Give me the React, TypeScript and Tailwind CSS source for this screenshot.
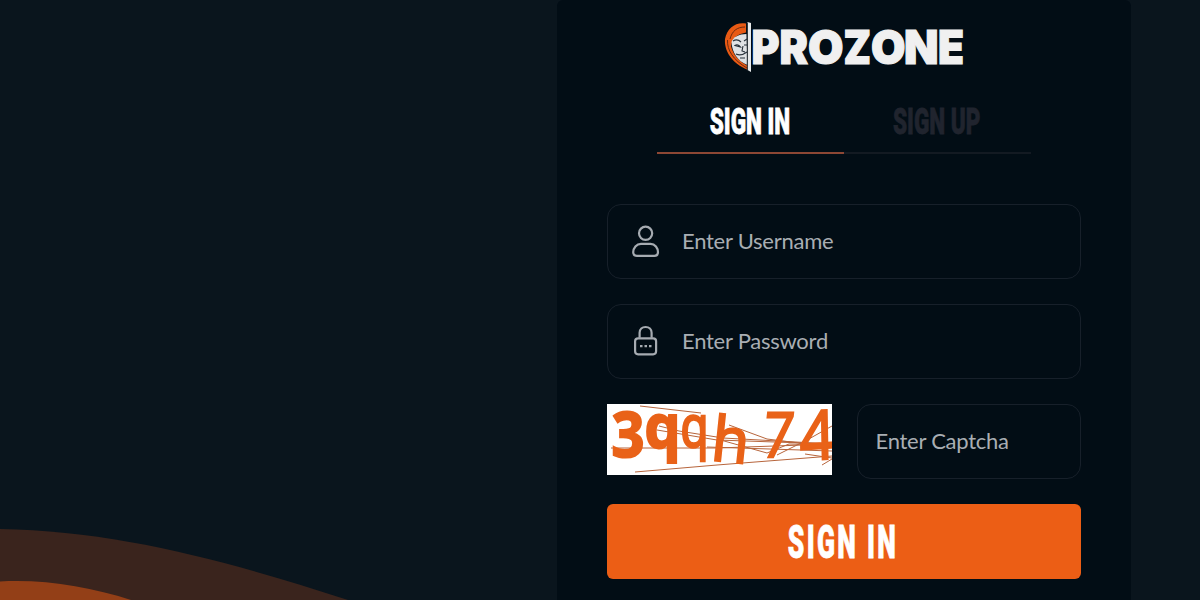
import type { ReactNode } from 'react';

interface FieldProps {
  placeholder: string;
  type?: string;
  icon?: ReactNode;
}

interface TabProps {
  label: string;
  active?: boolean;
}

// [letter, x, width]
const LOGO_LETTERS: [string, number, number][] = [
  ['P', 29.5, 28],
  ['R', 57.5, 28.5],
  ['O', 86, 35.5],
  ['Z', 121.5, 27.5],
  ['O', 149, 34.5],
  ['N', 182, 34.5],
  ['E', 216, 26],
];

const CAPTCHA_LINES = [
  'M33 2 L94 9',
  'M4 44 H110 L225 40',
  'M28 68 L110 61 L225 52',
  'M52 22 L72 27 L116 34 L225 40',
  'M50 26 L110 36 L225 40',
  'M122 21 L160 35 L200 40 L225 43',
  'M110 35 L160 49 L182 40 L225 41',
  'M170 51 L200 36 L225 22',
  'M100 43 L225 47',
  'M198 50 L225 54',
  'M215 61 L225 55',
];

const Logo = () => (
  <svg width="244" height="60" viewBox="0 0 244 60" className="block">
    <path d="M24 5.5C14 3.5 5 10 3 21C2 32 9 45 26 52V48C16 43 11 36 9 28C10 20 16 16 24 14.5Z" fill="#e85a14" />
    <path d="M23 9C15 9 10 13 8 21M5.5 22C5 32 11 42 25 50" fill="none" stroke="#6d2a10" strokeWidth="1" />
    <path d="M24.5 16C17 16 11 19 9.5 24C10 34 15 43 25.5 47Z" fill="#dfe2e4" />
    <path
      d="M11 23C14 21 17 22 19 24M22 23L25 21M13 27.5C15 26 17 27 18.5 29ZM22 27H25M21 28L20 33L23 34M14 36C18 38 21 37 25 34M18 40H23"
      fill="none"
      stroke="#27313a"
      strokeWidth="1.1"
    />
    <path d="M25.5 4L29 5V54L25.5 52Z" fill="#e8eaea" />
    <path d="M25.3 5V52" stroke="#20282e" strokeWidth="1" />
    {LOGO_LETTERS.map(([letter, x, width]) => (
      <text
        key={x}
        x={x}
        y="46"
        textLength={width}
        lengthAdjust="spacingAndGlyphs"
        fill="#f0f0f0"
        stroke="#f0f0f0"
        strokeWidth="1.2"
        className="font-['Inter',sans-serif] text-[47px] font-black"
      >
        {letter}
      </text>
    ))}
  </svg>
);

const UserIcon = () => (
  <svg width="30" height="34" viewBox="0 0 30 34" fill="none" stroke="#a6abb1" strokeWidth="2.2" className="block">
    <circle cx="14.6" cy="9.3" r="6.6" />
    <path d="M10 19.8H19.5C24 19.8 27 24.3 27 28.3C27 30.8 25.5 31.8 23.5 31.8H6C4 31.8 2.2 30.8 2.2 28.3C2.2 24.3 5.5 19.8 10 19.8Z" />
  </svg>
);

const LockIcon = () => (
  <svg width="30" height="34" viewBox="0 0 30 34" fill="none" stroke="#a6abb1" strokeWidth="2.2" className="block">
    <path d="M8.6 13.8V8.8C8.6 5.3 11.1 3 14.6 3S20.6 5.3 20.6 8.8V13.8" />
    <rect x="4.1" y="14.3" width="21" height="16" rx="3" />
    <path d="M9 22.2H11.5M13.5 22.2H16M18 22.2H20.5" />
  </svg>
);

const Captcha = () => (
  <svg
    width="225"
    height="71"
    viewBox="0 0 225 71"
    fill="#e96218"
    className="bg-white font-['Open_Sans',sans-serif] text-[62px]"
  >
    <g fill="none" stroke="#b7653c" strokeWidth="1">
      {CAPTCHA_LINES.map((d) => (
        <path key={d} d={d} />
      ))}
    </g>
    <g stroke="#e96218">
      <text transform="translate(4.5 53) scale(.93 1)" strokeWidth="2" className="font-bold">3</text>
      <text transform="translate(37.5 44) scale(.92 .97)" strokeWidth="2" className="font-bold">q</text>
      <text transform="translate(73.5 42.5) scale(.74 .94)" strokeWidth="2.8">q</text>
      <text transform="translate(103 56) rotate(6) scale(.98 1)" strokeWidth="2.2">h</text>
      <text transform="translate(154 53) skewX(-6) scale(.85 1)" strokeWidth="2.4">7</text>
      <text transform="translate(193 57) rotate(-4) skewX(-3) scale(1 1.1)" strokeWidth="2">4</text>
    </g>
  </svg>
);

const Tab = ({ label, active }: TabProps) => (
  <button className="flex flex-1 flex-col font-['Roboto',sans-serif] text-[37px] leading-[54px] font-black whitespace-nowrap">
    <span
      className={`flex h-[57px] w-full justify-center ${
        active ? 'text-white [-webkit-text-stroke:0.8px_#fff]' : 'text-[#20242e] [-webkit-text-stroke:0.8px_#20242e]'
      }`}
    >
      <span className="-ml-[1px] block scale-x-[.61]">{label}</span>
    </span>
    <span className={`block h-[2px] w-full ${active ? 'bg-[#8d4734]' : 'bg-[#131a22]'}`} />
  </button>
);

const Field = ({ placeholder, type = 'text', icon }: FieldProps) => (
  <label className={`flex h-[75px] items-center rounded-[14px] border border-[#17202a] pb-[2px] ${icon ? 'pl-[23px]' : 'pl-[18px]'}`}>
    {icon && <span className="mr-[21px] shrink-0">{icon}</span>}
    <input
      type={type}
      placeholder={placeholder}
      className="w-full min-w-0 bg-transparent font-['Lato',sans-serif] text-[22px] tracking-[-0.25px] text-white outline-none placeholder:text-[#a9aeb3]"
    />
  </label>
);

export default function App() {
  return (
    <div className="relative flex h-[600px] w-[1200px] overflow-hidden bg-[#0a151d]">
      <svg width="350" height="75" viewBox="0 525 350 75" className="absolute bottom-0 left-0">
        <path d="M0 529C120 531 230 562 348 600H0Z" fill="#3a241d" />
        <path d="M0 581.5C45 579 90 587 131 600H0Z" fill="#933f17" />
      </svg>

      <main className="ml-[557px] flex w-[574px] flex-col rounded-t-md bg-[#020d15] px-[50px] pt-[18px]">
        <div className="flex pl-[115px]">
          <Logo />
        </div>

        <nav className="mx-[50px] mt-[17px] flex">
          <Tab label="SIGN IN" active />
          <Tab label="SIGN UP" />
        </nav>

        <form className="mt-[50px] flex flex-col gap-[25px]" onSubmit={(e) => e.preventDefault()}>
          <Field placeholder="Enter Username" icon={<UserIcon />} />
          <Field placeholder="Enter Password" type="password" icon={<LockIcon />} />
          <div className="grid grid-cols-2 gap-[25px]">
            <Captcha />
            <Field placeholder="Enter Captcha" />
          </div>
          <button
            type="submit"
            className="flex h-[75px] items-center justify-center rounded-md bg-[#ec5e15] pt-[2px] font-['Roboto',sans-serif] text-[46px] font-black tracking-[4px] whitespace-nowrap text-white [-webkit-text-stroke:0.8px_#fff]"
          >
            <span className="-ml-[1px] block scale-x-[.575]">SIGN IN</span>
          </button>
        </form>
      </main>
    </div>
  );
}
